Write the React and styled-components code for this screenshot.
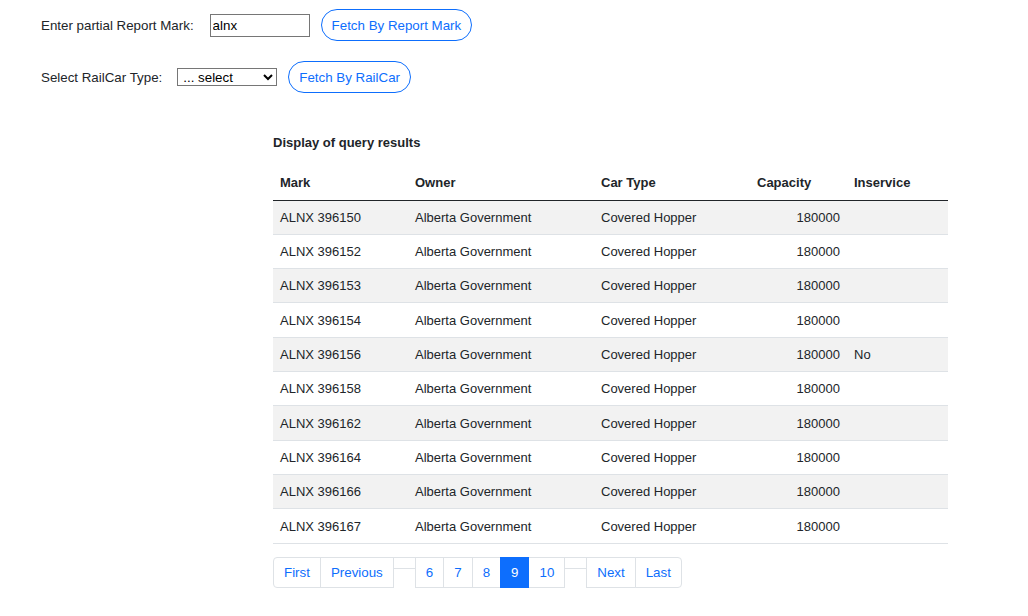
import React from "react";
import styled, { createGlobalStyle } from "styled-components";

const Global = createGlobalStyle`
  html, body { margin: 0; padding: 0; background: #fff; }
  body { font-family: "Liberation Sans", Arial, sans-serif; font-size: 13px; color: #212529; }
`;

const Page = styled.div`
  padding: 9px 0 0 41px;
  display: flex;
  flex-direction: column;
  align-items: flex-start;
`;

const FormRow = styled.div`
  display: flex;
  align-items: center;
  height: 32px;
  margin-bottom: ${(p) => p.$mb || 0}px;
`;

const Label = styled.label`
  font-size: 13.33px;
  color: #212529;
  margin-right: ${(p) => p.$gap}px;
`;

const TextInput = styled.input`
  width: 100px;
  height: 23px;
  box-sizing: border-box;
  border: 1px solid #767676;
  border-radius: 0;
  padding: 1px 2px;
  font-family: "Liberation Sans", Arial, sans-serif;
  font-size: 13.33px;
  color: #000;
  margin-right: 11px;
  outline: none;
`;

const Select = styled.select`
  width: 100px;
  height: 18px;
  box-sizing: border-box;
  border: 1px solid #767676;
  border-radius: 0;
  padding: 0 0 0 1px;
  font-family: "Liberation Sans", Arial, sans-serif;
  font-size: 13.33px;
  color: #000;
  background: #fff;
  margin-right: 11px;
`;

const PillButton = styled.button`
  height: 32px;
  box-sizing: border-box;
  padding: 0 10px;
  border: 1px solid #0d6efd;
  border-radius: 16px;
  background: #fff;
  color: #0d6efd;
  font-family: "Liberation Sans", Arial, sans-serif;
  font-size: 13.33px;
  cursor: pointer;
`;

const Results = styled.section`
  margin: 42px 0 0 232px;
  width: 675px;
`;

const Title = styled.h4`
  margin: 0 0 15px 0;
  font-size: 13px;
  line-height: 15px;
  font-weight: bold;
  color: #212529;
`;

const Table = styled.table`
  width: 675px;
  border-collapse: collapse;
  table-layout: fixed;
  font-size: 13px;
`;

const Th = styled.th`
  box-sizing: border-box;
  text-align: left;
  font-weight: bold;
  padding: 1px 7px 0;
  height: 35px;
  border-bottom: 1.5px solid #212529;
  width: ${(p) => p.$w}px;
`;

const Tr = styled.tr`
  height: 34.33px;
  background: ${(p) => (p.$striped ? "#f2f2f2" : "#fff")};
  border-bottom: 1px solid #dee2e6;
`;

const Td = styled.td`
  padding: 0 7px;
  text-align: ${(p) => (p.$right ? "right" : "left")};
  color: #212529;
`;

const Pager = styled.ul`
  list-style: none;
  display: flex;
  align-items: flex-start;
  margin: 13px 0 0 0;
  padding: 0;
`;

const PageItem = styled.li`
  margin-left: ${(p) => (p.$first ? 0 : -1)}px;
`;

const PageLink = styled.a`
  display: block;
  box-sizing: border-box;
  height: 31px;
  line-height: 29px;
  padding: 0 10px;
  border: 1px solid #dee2e6;
  font-size: 13.33px;
  text-decoration: none;
  background: ${(p) => (p.$active ? "#0d6efd" : "#fff")};
  color: ${(p) => (p.$active ? "#fff" : "#0d6efd")};
  border-color: ${(p) => (p.$active ? "#0d6efd" : "#dee2e6")};
  border-radius: ${(p) => (p.$pos === "start" ? "4px 0 0 4px" : p.$pos === "end" ? "0 4px 4px 0" : "0")};
  position: ${(p) => (p.$active ? "relative" : "static")};
`;

const EmptyLink = styled.span`
  display: block;
  width: 23px;
  height: 12px;
  box-sizing: border-box;
  border: 1px solid #dee2e6;
  background: #fff;
`;

const rows = [
  ["ALNX 396150", ""],
  ["ALNX 396152", ""],
  ["ALNX 396153", ""],
  ["ALNX 396154", ""],
  ["ALNX 396156", "No"],
  ["ALNX 396158", ""],
  ["ALNX 396162", ""],
  ["ALNX 396164", ""],
  ["ALNX 396166", ""],
  ["ALNX 396167", ""],
];

export default function App() {
  return (
    <>
      <Global />
      <Page>
        <FormRow $mb={20}>
          <Label $gap={16}>Enter partial Report Mark:</Label>
          <TextInput defaultValue="alnx" />
          <PillButton>Fetch By Report Mark</PillButton>
        </FormRow>
        <FormRow>
          <Label $gap={15}>Select RailCar Type:</Label>
          <Select defaultValue="">
            <option value="">... select</option>
          </Select>
          <PillButton>Fetch By RailCar</PillButton>
        </FormRow>
        <Results>
          <Title>Display of query results</Title>
          <Table>
            <thead>
              <tr>
                <Th $w={135}>Mark</Th>
                <Th $w={186}>Owner</Th>
                <Th $w={156}>Car Type</Th>
                <Th $w={97}>Capacity</Th>
                <Th $w={101}>Inservice</Th>
              </tr>
            </thead>
            <tbody>
              {rows.map(([mark, inservice], i) => (
                <Tr key={mark} $striped={i % 2 === 0}>
                  <Td>{mark}</Td>
                  <Td>Alberta Government</Td>
                  <Td>Covered Hopper</Td>
                  <Td $right>180000</Td>
                  <Td>{inservice}</Td>
                </Tr>
              ))}
            </tbody>
          </Table>
          <Pager>
            <PageItem $first><PageLink $pos="start" href="#">First</PageLink></PageItem>
            <PageItem><PageLink href="#">Previous</PageLink></PageItem>
            <PageItem><EmptyLink /></PageItem>
            <PageItem><PageLink href="#">6</PageLink></PageItem>
            <PageItem><PageLink href="#">7</PageLink></PageItem>
            <PageItem><PageLink href="#">8</PageLink></PageItem>
            <PageItem><PageLink $active href="#">9</PageLink></PageItem>
            <PageItem><PageLink href="#">10</PageLink></PageItem>
            <PageItem><EmptyLink /></PageItem>
            <PageItem><PageLink href="#">Next</PageLink></PageItem>
            <PageItem><PageLink $pos="end" href="#">Last</PageLink></PageItem>
          </Pager>
        </Results>
      </Page>
    </>
  );
}
